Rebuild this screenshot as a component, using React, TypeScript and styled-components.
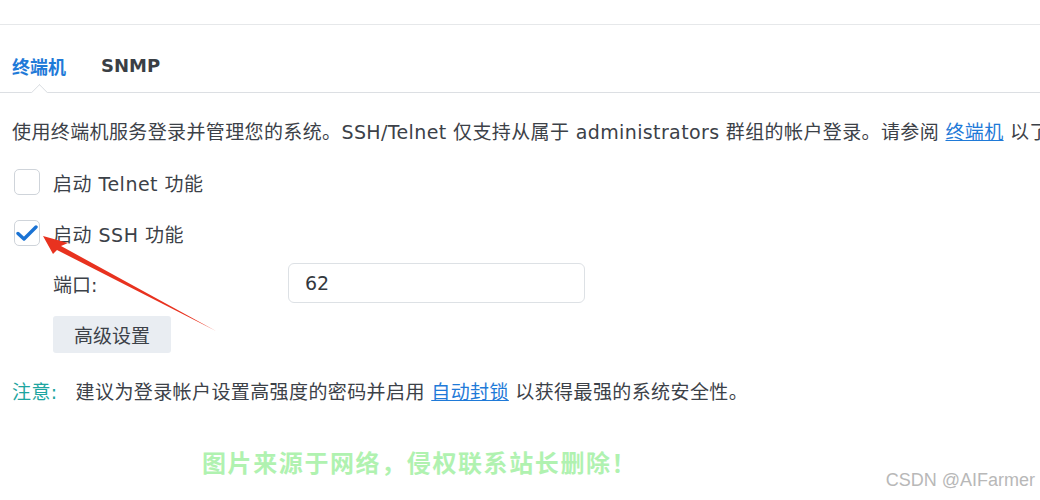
import React from 'react';
import styled, { createGlobalStyle } from 'styled-components';

const GlobalStyle = createGlobalStyle`
  html, body {
    margin: 0;
    padding: 0;
    background: #ffffff;
  }
  body {
    font-family: 'DejaVu Sans', 'Noto Sans CJK SC', sans-serif;
    color: #3c4148;
  }
`;

export default function App() {
  return (
    <>
      <GlobalStyle />
      <Page>
        <TopBar />
        <Tabs>
          <Tab active>终端机</Tab>
          <Tab>SNMP</Tab>
        </Tabs>
        <Content>
          <Desc>
            使用终端机服务登录并管理您的系统。SSH/Telnet 仅支持从属于 administrators
            群组的帐户登录。请参阅 <TextLink>终端机</TextLink> 以了解更多信息。
          </Desc>
          <CheckRow>
            <Box />
            <Label>启动 Telnet 功能</Label>
          </CheckRow>
          <CheckRow>
            <Box>
              <svg width='22' height='18' viewBox='0 0 22 18'>
                <path
                  d='M2 9.5 L8 15 L20 3'
                  fill='none'
                  stroke='#1a73d4'
                  strokeWidth='3.4'
                  strokeLinecap='round'
                  strokeLinejoin='round'
                />
              </svg>
            </Box>
            <Label>启动 SSH 功能</Label>
          </CheckRow>
          <Indent>
            <FieldRow>
              <FieldLabel>端口:</FieldLabel>
              <Input>62</Input>
            </FieldRow>
            <Button>高级设置</Button>
          </Indent>
          <Note>
            <NoteTag>注意:</NoteTag>
            <span>
              建议为登录帐户设置高强度的密码并启用 <TextLink>自动封锁</TextLink> 以获得最强的系统安全性。
            </span>
          </Note>
        </Content>

        <Arrow width='1040' height='500' viewBox='0 0 1040 500'>
          <path
            d='M43 236 L68 243 L61 246 L216 331 L57 250 L53 254 Z'
            fill='#e8321f'
          />
        </Arrow>
        <Watermark>图片来源于网络，侵权联系站长删除！</Watermark>
        <Credit>CSDN @AIFarmer</Credit>
      </Page>
    </>
  );
}

const Page = styled.div`
  position: relative;
  width: 1040px;
  height: 500px;
  overflow: hidden;
  background: #ffffff;
`;

const TopBar = styled.div`
  height: 24px;
  border-bottom: 1px solid #e6e8ea;
`;

const Tabs = styled.div`
  display: flex;
  align-items: center;
  gap: 35px;
  height: 67px;
  padding: 0 12px;
  border-bottom: 1px solid #dcdfe3;
`;

const Tab = styled.div<{ active?: boolean }>`
  position: relative;
  height: 100%;
  display: flex;
  align-items: center;
  box-sizing: border-box;
  padding-top: 14px;
  font-size: 18px;
  font-weight: 700;
  color: ${(p) => (p.active ? '#1f7ad8' : '#3a3f45')};

  &::after {
    content: '';
    display: ${(p) => (p.active ? 'block' : 'none')};
    position: absolute;
    left: 50%;
    bottom: -1px;
    width: 12px;
    height: 12px;
    margin-left: -6px;
    background: #ffffff;
    border-left: 1px solid #dcdfe3;
    border-top: 1px solid #dcdfe3;
    transform: translateY(50%) rotate(45deg);
    clip-path: polygon(0 0, 100% 0, 0 100%);
  }
`;

const Content = styled.div`
  padding: 0 0 0 12px;
  display: flex;
  flex-direction: column;
`;

const Desc = styled.div`
  margin-top: 25px;
  font-size: 19px;
  line-height: 28px;
  white-space: nowrap;
  letter-spacing: 0.38px;
`;

const TextLink = styled.a`
  color: #1f7ad8;
  text-decoration: underline;
  cursor: pointer;
`;

const CheckRow = styled.div`
  display: flex;
  align-items: center;
  gap: 13px;
  height: 26px;
  margin-top: 23px;

  & + & {
    margin-top: 25px;
  }
`;

const Box = styled.div`
  width: 26px;
  height: 26px;
  box-sizing: border-box;
  border: 1px solid #cfd4da;
  border-radius: 5px;
  display: flex;
  align-items: center;
  justify-content: center;
  margin-left: 2px;
  background: #fff;
`;

const Label = styled.span`
  font-size: 19px;
  letter-spacing: 0.5px;
`;

const Indent = styled.div`
  padding-left: 41px;
  display: flex;
  flex-direction: column;
`;

const FieldRow = styled.div`
  display: flex;
  align-items: center;
  margin-top: 17px;
  height: 40px;
`;

const FieldLabel = styled.span`
  width: 235px;
  font-size: 19px;
`;

const Input = styled.div`
  width: 297px;
  height: 40px;
  box-sizing: border-box;
  border: 1px solid #dde1e5;
  border-radius: 6px;
  padding-left: 16px;
  display: flex;
  align-items: center;
  font-size: 19px;
  color: #33383e;
`;

const Button = styled.div`
  margin-top: 13px;
  width: 118px;
  height: 37px;
  display: flex;
  align-items: center;
  justify-content: center;
  background: #e9edf2;
  border-radius: 3px;
  font-size: 19px;
  color: #3c4148;
`;

const Note = styled.div`
  display: flex;
  gap: 18px;
  margin-top: 25px;
  font-size: 19px;
  line-height: 28px;
  letter-spacing: 0.4px;
`;

const NoteTag = styled.span`
  color: #1ea5a0;
`;

const Arrow = styled.svg`
  position: absolute;
  left: 0;
  top: 0;
  pointer-events: none;
`;

const Watermark = styled.div`
  position: absolute;
  left: 202px;
  top: 444px;
  font-size: 24px;
  font-weight: 700;
  color: #b0f2b0;
  letter-spacing: 1.6px;
  font-family: 'Noto Sans CJK SC', sans-serif;
`;

const Credit = styled.div`
  position: absolute;
  right: 5px;
  top: 470px;
  font-size: 18px;
  color: #b8b8b8;
  font-family: 'Liberation Sans', Arial, sans-serif;
`;
